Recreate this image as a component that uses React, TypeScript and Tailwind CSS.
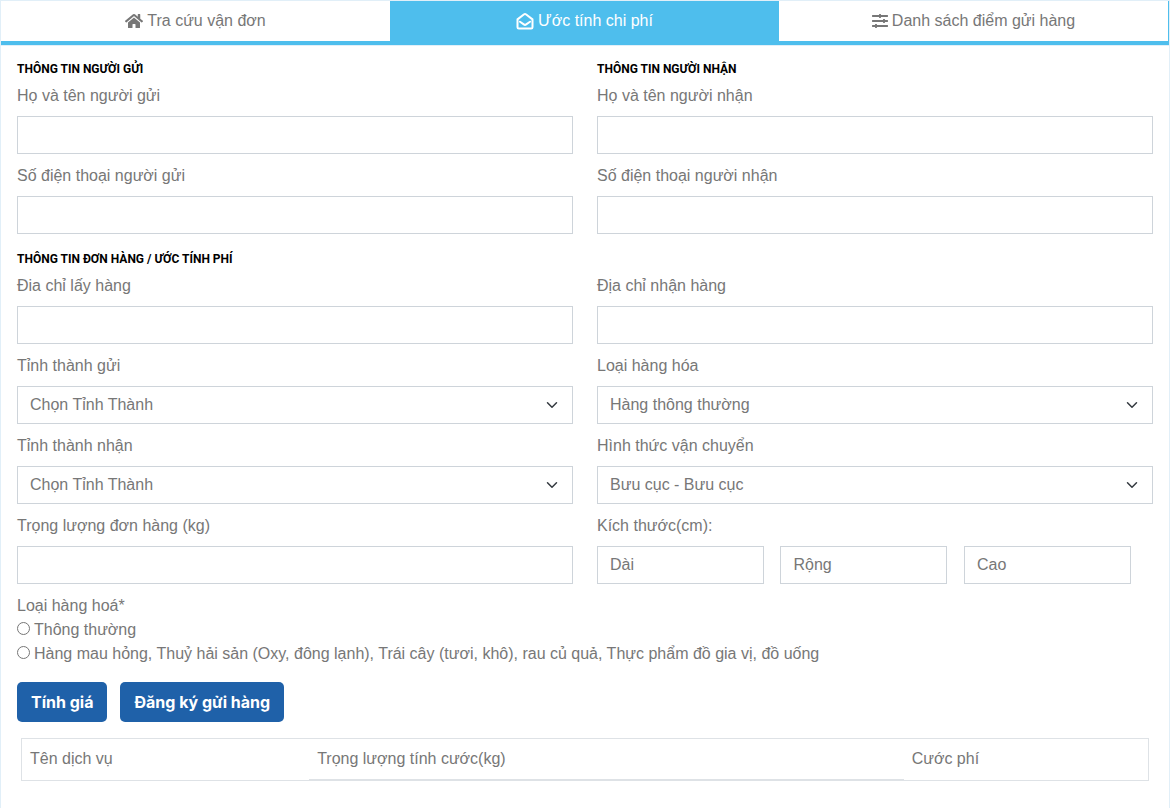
import { ReactElement, ReactNode, useState } from 'react';
import { FaHome, FaSlidersH } from 'react-icons/fa';
import clsx from 'clsx';

function EnvelopeIcon({ className }: { className?: string }): ReactElement {
  return (
    <svg
      viewBox="0 0 18 18"
      fill="none"
      stroke="currentColor"
      strokeWidth="2"
      strokeLinecap="round"
      strokeLinejoin="round"
      className={className}
    >
      <path d="M1.5 7.4 7.8 2.5a2 2 0 0 1 2.4 0l6.3 4.9v7.8a1.3 1.3 0 0 1-1.3 1.3H2.8a1.3 1.3 0 0 1-1.3-1.3Z" />
      <path d="m4 9.7 3.8 2.7a2 2 0 0 0 2.4 0L14 9.7" />
    </svg>
  );
}

const tabs = [
  { label: 'Tra cứu vận đơn', icon: FaHome, iconClass: 'size-[18px]' },
  { label: 'Ước tính chi phí', icon: EnvelopeIcon, iconClass: 'size-[18px]' },
  { label: 'Danh sách điểm gửi hàng', icon: FaSlidersH, iconClass: 'size-4' },
];

const goodsTypes = [
  'Thông thường',
  'Hàng mau hỏng, Thuỷ hải sản (Oxy, đông lạnh), Trái cây (tươi, khô), rau củ quả, Thực phẩm đồ gia vị, đồ uống',
];

const dimensions = [
  { id: 'length', label: 'Dài' },
  { id: 'width', label: 'Rộng' },
  { id: 'height', label: 'Cao' },
];

const controlClass = 'block h-[38px] border border-[#ced4da] bg-white px-3 text-[#777] outline-none focus:border-[#4ebeed]';

function SectionTitle({ children }: { children?: ReactNode }): ReactElement {
  return (
    <h2 className="my-[5px] min-h-5 font-['Roboto',sans-serif] text-xs leading-5 font-bold text-black uppercase">
      {children}
    </h2>
  );
}

function TextField({ id, label, type = 'text' }: { id: string; label: string; type?: string }): ReactElement {
  return (
    <div className="mb-2.5">
      <label htmlFor={id} className="mb-2 block">
        {label}
      </label>
      <input id={id} name={id} type={type} className={clsx(controlClass, 'w-full')} />
    </div>
  );
}

function SelectField({ id, label, options }: { id: string; label: string; options: string[] }): ReactElement {
  return (
    <div className="mb-2.5">
      <label htmlFor={id} className="mb-2 block">
        {label}
      </label>
      <div className="relative">
        <select id={id} name={id} className={clsx(controlClass, 'w-full appearance-none')}>
          {options.map((option) => (
            <option key={option}>{option}</option>
          ))}
        </select>
        <svg
          viewBox="0 0 16 16"
          fill="none"
          stroke="#343a40"
          strokeWidth="2"
          strokeLinecap="round"
          strokeLinejoin="round"
          className="pointer-events-none absolute top-[13px] right-[13px] h-3 w-4"
        >
          <path d="m2 5 6 6 6-6" />
        </svg>
      </div>
    </div>
  );
}

export default function App(): ReactElement {
  const [activeTab, setActiveTab] = useState(1);

  return (
    <div className="min-h-screen border-x border-t border-[#e1eff8] bg-white font-['Liberation_Sans',Arial,sans-serif] text-base text-[#777]">
      <nav className="border-b border-[#e1eff8]">
        <div className="grid grid-cols-3 border-r border-b-4 border-[#4ebeed]">
          {tabs.map(({ label, icon: Icon, iconClass }, index) => (
            <button
              key={label}
              type="button"
              onClick={() => setActiveTab(index)}
              className={clsx(
                'flex h-10 cursor-pointer items-center justify-center gap-1',
                index === activeTab && 'bg-[#4ebeed] text-white',
              )}
            >
              <Icon className={clsx('shrink-0', iconClass)} />
              {label}
            </button>
          ))}
        </div>
      </nav>

      <form className="px-4 pt-2 pb-6" onSubmit={(e) => e.preventDefault()}>
        <div className="grid grid-cols-2 gap-x-6">
          <SectionTitle>Thông tin người gửi</SectionTitle>
          <SectionTitle>Thông tin người nhận</SectionTitle>
          <TextField id="senderName" label="Họ và tên người gửi" />
          <TextField id="receiverName" label="Họ và tên người nhận" />
          <TextField id="senderPhone" label="Số điện thoại người gửi" type="tel" />
          <TextField id="receiverPhone" label="Số điện thoại người nhận" type="tel" />
        </div>

        <SectionTitle>Thông tin đơn hàng / ước tính phí</SectionTitle>
        <div className="grid grid-cols-2 gap-x-6">
          <TextField id="pickupAddress" label="Đia chỉ lấy hàng" />
          <TextField id="deliveryAddress" label="Địa chỉ nhận hàng" />
          <SelectField id="fromProvince" label="Tỉnh thành gửi" options={['Chọn Tỉnh Thành']} />
          <SelectField id="goodsKind" label="Loại hàng hóa" options={['Hàng thông thường']} />
          <SelectField id="toProvince" label="Tỉnh thành nhận" options={['Chọn Tỉnh Thành']} />
          <SelectField id="shippingMethod" label="Hình thức vận chuyển" options={['Bưu cục - Bưu cục']} />
          <TextField id="weight" label="Trọng lượng đơn hàng (kg)" />
          <div className="mb-2.5">
            <label htmlFor="length" className="mb-2 block">
              Kích thước(cm):
            </label>
            <div className="flex">
              {dimensions.map(({ id, label }) => (
                <input
                  key={id}
                  id={id}
                  name={id}
                  type="text"
                  placeholder={label}
                  aria-label={label}
                  className={clsx(controlClass, 'mr-[3%] w-[30%] placeholder:text-[#777]')}
                />
              ))}
            </div>
          </div>
        </div>

        <fieldset>
          <legend>Loại hàng hoá*</legend>
          {goodsTypes.map((type, index) => (
            <div key={type} className="flex items-start gap-1">
              <input id={`goods_${index}`} name="goods" type="radio" className="mt-1 size-[13px] shrink-0" />
              <label htmlFor={`goods_${index}`}>{type}</label>
            </div>
          ))}
        </fieldset>

        <div className="mt-4 flex gap-[13px] font-['Inter',sans-serif] font-bold text-white">
          <button type="submit" className="h-10 cursor-pointer rounded-[5px] bg-[#1f61a9] px-3.5">
            Tính giá
          </button>
          <button type="button" className="h-10 cursor-pointer rounded-[5px] bg-[#1f61a9] px-3.5">
            Đăng ký gửi hàng
          </button>
        </div>

        <div className="mx-1 mt-4">
          <table className="w-full table-fixed border-separate border-spacing-0 border border-[#dee2e6] text-left">
            <thead>
              <tr className="align-top">
                <th className="w-[25.5%] p-2 font-normal">Tên dịch vụ</th>
                <th className="w-[52.8%] border-b border-[#dee2e6] p-2 font-normal">Trọng lượng tính cước(kg)</th>
                <th className="p-2 font-normal">Cước phí</th>
              </tr>
            </thead>
          </table>
        </div>
      </form>
    </div>
  );
}
